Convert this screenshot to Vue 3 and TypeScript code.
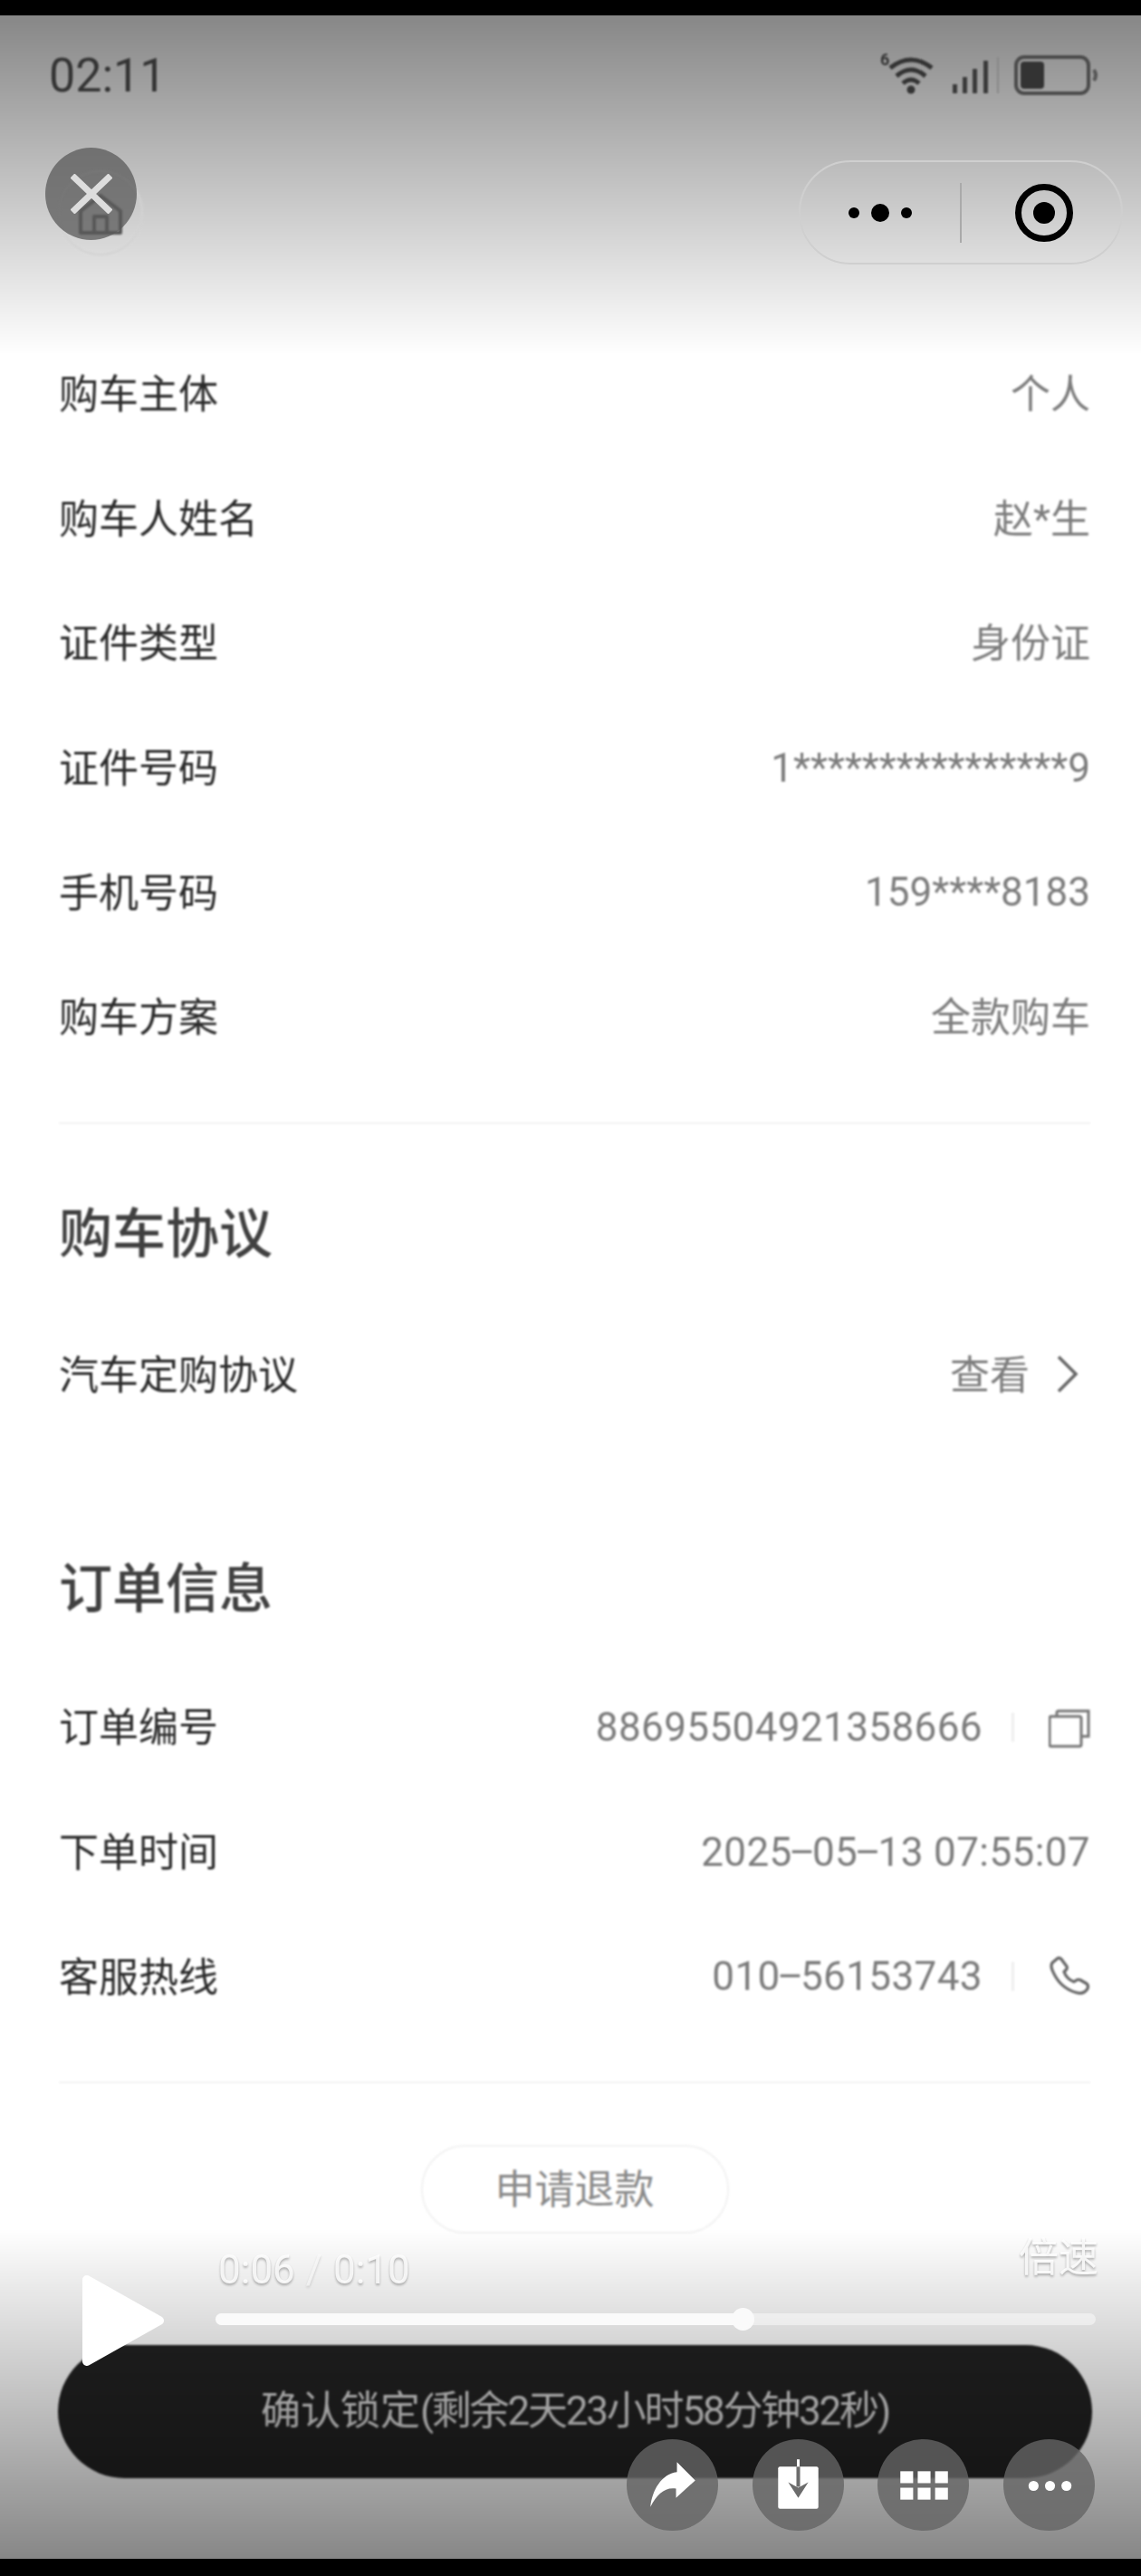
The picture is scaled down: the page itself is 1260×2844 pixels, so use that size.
<template>
  <div class="page">
    <main class="content">
      <div v-for="row in buyerRows" :key="row.label" class="row">
        <span class="label">{{ row.label }}</span>
        <span class="value" :class="{ digits: /\d/.test(row.value) }">{{ row.value }}</span>
      </div>
      <div class="divider first-divider"></div>

      <h2 class="heading agreement-heading">购车协议</h2>
      <div class="row agreement-row">
        <span class="label">汽车定购协议</span>
        <span class="value link">
          查看
          <svg class="chevron" viewBox="0 0 25 42" fill="none">
            <path d="M3 2 L22 21 L3 40" stroke="#666" stroke-width="3.5" />
          </svg>
        </span>
      </div>

      <h2 class="heading order-heading">订单信息</h2>
      <div class="order-rows">
        <div class="row">
          <span class="label">订单编号</span>
          <span class="value digits number">
            88695504921358666
            <i class="sep"></i>
            <svg class="action" viewBox="0 0 46 46" fill="none" stroke="#777" stroke-width="3">
              <rect x="1" y="11" width="35" height="33" rx="2" />
              <path d="M9 11 V7 Q9 5 11 5 H37 M36 5 H44 V33 H36" />
            </svg>
          </span>
        </div>
        <div class="row">
          <span class="label">下单时间</span>
          <span class="value digits number">
            <span>2025<b class="dash">–</b>05<b class="dash">–</b>13 07:55:07</span>
          </span>
        </div>
        <div class="row">
          <span class="label">客服热线</span>
          <span class="value digits number">
            <span>010<b class="dash">–</b>56153743</span>
            <i class="sep"></i>
            <svg class="action" viewBox="0 0 46 46" fill="none" stroke="#666" stroke-width="3.2" stroke-linejoin="round">
              <path d="M4 8 L10 3 Q12 2 14 4 L20 12 Q21 14 19 16 L17 18 Q20 26 28 29 L31 27 Q33 26 35 27 L42 31 Q45 34 42 38 Q38 43 31 41 Q12 36 4 16 Q2 11 4 8 Z" />
            </svg>
          </span>
        </div>
      </div>
      <div class="divider last-divider"></div>

      <div class="refund-wrap">
        <button class="refund" type="button">申请退款</button>
      </div>
    </main>

    <button class="confirm" type="button">确认锁定<span class="countdown">(剩余2天23小时58分钟32秒)</span></button>

    <div class="shade shade-top"></div>
    <div class="shade shade-bottom"></div>
    <div class="black-bar black-top"></div>
    <div class="black-bar black-bottom"></div>

    <header class="status">
      <span class="clock">02:11</span>
      <div class="status-icons">
        <span class="wifi-six">6</span>
        <svg class="wifi" viewBox="0 0 52 44" fill="none" stroke="#333" stroke-width="5">
          <path d="M3 14 Q26 -4 49 14" />
          <path d="M10 23 Q26 9 42 23" />
          <path d="M17 31 Q26 23 35 31" />
          <circle cx="26" cy="38" r="4.5" fill="#333" stroke="none" />
        </svg>
        <svg class="signal" viewBox="0 0 52 40" fill="#3a3a3a">
          <rect x="0" y="30" width="5" height="10" />
          <rect x="11" y="22" width="5" height="18" />
          <rect x="22" y="13" width="5" height="27" />
          <rect x="34" y="4" width="5" height="36" />
          <rect x="49" y="0" width="2" height="40" fill="#888" />
        </svg>
        <svg class="battery" viewBox="0 0 94 44" fill="none">
          <rect x="2" y="2" width="80" height="40" rx="9" stroke="#4a4a4a" stroke-width="4" />
          <rect x="7" y="7" width="26" height="30" rx="4" fill="#333" />
          <path d="M88 16 Q92 22 88 28" stroke="#555" stroke-width="4" />
        </svg>
      </div>
    </header>

    <div class="home-btn">
      <svg class="home-icon" viewBox="0 0 52 46" fill="none" stroke="#555" stroke-width="4" stroke-linejoin="round">
        <path d="M4 20 L26 3 L48 20 V44 H4 Z" />
        <path d="M19 44 V26 H33 V44" />
      </svg>
    </div>
    <div class="close-btn">
      <svg viewBox="0 0 46 44" fill="none" stroke="#ddd" stroke-width="7">
        <path d="M2 2 L44 42 M44 2 L2 42" />
      </svg>
    </div>

    <div class="capsule">
      <div class="capsule-dots">
        <i class="dot"></i>
        <i class="dot big"></i>
        <i class="dot"></i>
      </div>
      <i class="capsule-line"></i>
      <div class="capsule-target"><i></i></div>
    </div>

    <svg class="play" viewBox="0 0 92 102">
      <path d="M6 6 L86 51 L6 96 Z" fill="#fff" stroke="#fff" stroke-width="10" stroke-linejoin="round" />
    </svg>
    <span class="time">0:06<em>/</em>0:10</span>
    <span class="speed">倍速</span>
    <div class="progress">
      <div class="progress-fill" :style="{ width: progress + '%' }"></div>
      <i class="thumb" :style="{ left: progress + '%' }"></i>
    </div>

    <div class="tools">
      <button class="tool" type="button">
        <svg viewBox="0 0 100 100">
          <path d="M55 25 L75 45 L54 64 V54 C42 52 33 60 26 74 C28 56 38 38 55 36 Z" fill="#fff" />
        </svg>
      </button>
      <button class="tool" type="button">
        <svg viewBox="0 0 100 100">
          <rect x="28" y="30" width="44" height="46" rx="2" fill="#fff" />
          <path d="M50 22 V40" stroke="#fff" stroke-width="3" />
          <path d="M50 30 V52" stroke="#6c6c6c" stroke-width="4" />
          <path d="M39 47 L50 64 L61 47 L50 53 Z" fill="#6c6c6c" />
        </svg>
      </button>
      <button class="tool" type="button">
        <svg viewBox="0 0 100 100" fill="#fff">
          <rect v-for="cell in gridCells" :key="cell.x + '-' + cell.y" :x="cell.x" :y="cell.y" width="14" height="13" />
        </svg>
      </button>
      <button class="tool" type="button">
        <svg viewBox="0 0 100 100" fill="#fff">
          <circle cx="33" cy="51" r="5.5" />
          <circle cx="51" cy="51" r="5.5" />
          <circle cx="69" cy="51" r="5.5" />
        </svg>
      </button>
    </div>
  </div>
</template>

<script setup lang="ts">
interface InfoRow {
  label: string
  value: string
}

const buyerRows: InfoRow[] = [
  { label: '购车主体', value: '个人' },
  { label: '购车人姓名', value: '赵*生' },
  { label: '证件类型', value: '身份证' },
  { label: '证件号码', value: '1****************9' },
  { label: '手机号码', value: '159****8183' },
  { label: '购车方案', value: '全款购车' },
]

// Шкала плеера, процент пройденного
const progress = 60

const gridCells = [25, 44, 63].flatMap((x) => [35, 53].map((y) => ({ x, y })))
</script>

<style>
html,
body {
  margin: 0;
  background: #000;
}
</style>

<style scoped>
.page {
  position: relative;
  width: 1260px;
  height: 2844px;
  overflow: hidden;
  background: #fff;
  font-family: Roboto, "Noto Sans CJK SC", sans-serif;
}

.content {
  box-sizing: border-box;
  padding: 366px 56px 0 65px;
  filter: blur(1px);
}

.row {
  box-sizing: border-box;
  display: flex;
  align-items: center;
  justify-content: space-between;
  height: 137.6px;
  padding-bottom: 5px;
}

.label {
  font-size: 44px;
  color: #2b2b2b;
}

.value {
  display: flex;
  align-items: center;
  font-size: 44px;
  color: #7c7c7c;
}

.digits {
  padding-top: 5px;
}

.number {
  letter-spacing: 0.4px;
}

.dash {
  margin: 0 -3.5px;
  font-weight: 400;
}

.divider {
  height: 2px;
  background: #f2f2f2;
}

.first-divider {
  margin-top: 47px;
}

.last-divider {
  margin-top: 47px;
}

.heading {
  margin: 0;
  height: 90px;
  line-height: 90px;
  font-size: 59px;
  font-weight: 500;
  color: #404040;
}

.agreement-heading {
  margin-top: 77px;
}

.agreement-row {
  margin-top: 41px;
}

.order-heading {
  margin-top: 124px;
}

.order-rows {
  margin-top: 38px;
}

.chevron {
  width: 25px;
  height: 42px;
  margin: 5px 13px 0 29px;
}

.sep {
  width: 3px;
  height: 32px;
  margin: 0 38px 0 32px;
  background: #eee;
}

.action {
  width: 46px;
  height: 46px;
}

.refund-wrap {
  display: flex;
  justify-content: center;
  margin-top: 68px;
}

.refund {
  width: 340px;
  height: 98px;
  padding: 0 0 5px;
  border: 2px solid #f2f2f2;
  border-radius: 49px;
  background: #fff;
  font-family: inherit;
  font-size: 44px;
  color: #8a8a8a;
}

.confirm {
  position: absolute;
  left: 64px;
  top: 2589px;
  width: 1142px;
  height: 147px;
  padding: 0 0 10px;
  border: 0;
  border-radius: 74px;
  background: #222;
  font-family: inherit;
  font-size: 44px;
  color: #d8d8d8;
  filter: blur(1px);
}

.countdown {
  letter-spacing: -2.2px;
}

.shade {
  position: absolute;
  left: 0;
  width: 100%;
}

.shade-top {
  top: 17px;
  height: 375px;
  background: linear-gradient(rgba(0, 0, 0, 0.47), rgba(0, 0, 0, 0));
}

.shade-bottom {
  top: 2460px;
  height: 365px;
  background: linear-gradient(rgba(0, 0, 0, 0), rgba(0, 0, 0, 0.47));
}

.black-bar {
  position: absolute;
  left: 0;
  width: 100%;
  background: #000;
}

.black-top {
  top: 0;
  height: 17px;
}

.black-bottom {
  top: 2825px;
  height: 19px;
}

.status {
  position: absolute;
  left: 54px;
  right: 46px;
  top: 55px;
  height: 56px;
  display: flex;
  align-items: center;
  justify-content: space-between;
  filter: blur(1px);
}

.clock {
  font-size: 52px;
  color: #333;
}

.status-icons {
  position: relative;
  display: flex;
  align-items: center;
  height: 44px;
}

.wifi-six {
  position: absolute;
  left: -2px;
  top: -6px;
  font-size: 18px;
  font-weight: 700;
  color: #333;
}

.wifi {
  width: 52px;
  height: 44px;
  margin-left: 6px;
}

.signal {
  width: 52px;
  height: 40px;
  margin-left: 20px;
}

.battery {
  width: 94px;
  height: 44px;
  margin-left: 16px;
}

.home-btn {
  position: absolute;
  left: 64px;
  top: 188px;
  box-sizing: border-box;
  width: 94px;
  height: 94px;
  display: flex;
  align-items: center;
  justify-content: center;
  border: 2px solid #d2d2d2;
  border-radius: 50%;
  filter: blur(1px);
}

.home-icon {
  width: 52px;
  height: 46px;
  margin-top: 2px;
}

.close-btn {
  position: absolute;
  left: 50px;
  top: 163px;
  width: 101px;
  height: 102px;
  display: flex;
  align-items: center;
  justify-content: center;
  border-radius: 50%;
  background: rgba(90, 90, 90, 0.75);
}

.close-btn svg {
  width: 46px;
  height: 44px;
}

.capsule {
  position: absolute;
  left: 882px;
  top: 177px;
  box-sizing: border-box;
  width: 358px;
  height: 115px;
  display: flex;
  align-items: center;
  border: 2px solid #cfcfcf;
  border-radius: 58px;
  filter: blur(0.7px);
}

.capsule-dots {
  display: flex;
  align-items: center;
  justify-content: center;
  gap: 13px;
  width: 176px;
}

.dot {
  width: 12px;
  height: 12px;
  border-radius: 50%;
  background: #000;
}

.dot.big {
  width: 20px;
  height: 20px;
}

.capsule-line {
  width: 2px;
  height: 66px;
  background: #aaa;
}

.capsule-target {
  box-sizing: border-box;
  width: 64px;
  height: 64px;
  margin-left: 59px;
  display: flex;
  align-items: center;
  justify-content: center;
  border: 7px solid #000;
  border-radius: 50%;
}

.capsule-target i {
  width: 24px;
  height: 24px;
  border-radius: 50%;
  background: #000;
}

.play {
  position: absolute;
  left: 90px;
  top: 2511px;
  width: 92px;
  height: 102px;
}

.time {
  position: absolute;
  left: 241px;
  top: 2480px;
  font-size: 44px;
  line-height: 52px;
  color: rgba(255, 255, 255, 0.85);
  text-shadow: 0 2px 3px rgba(0, 0, 0, 0.3);
}

.time em {
  margin: 0 12px;
  font-style: normal;
  opacity: 0.5;
}

.speed {
  position: absolute;
  left: 1125px;
  top: 2467px;
  font-size: 44px;
  line-height: 52px;
  color: rgba(255, 255, 255, 0.85);
  text-shadow: 0 2px 3px rgba(0, 0, 0, 0.3);
}

.progress {
  position: absolute;
  left: 238px;
  top: 2554px;
  width: 972px;
  height: 13px;
  border-radius: 7px;
  background: rgba(255, 255, 255, 0.45);
}

.progress-fill {
  height: 100%;
  border-radius: 7px;
  background: #fafafa;
}

.thumb {
  position: absolute;
  top: -6px;
  width: 25px;
  height: 25px;
  margin-left: -13px;
  border-radius: 50%;
  background: #fafafa;
}

.tools {
  position: absolute;
  left: 692px;
  top: 2693px;
  display: flex;
  gap: 37.6px;
}

.tool {
  width: 101px;
  height: 101px;
  padding: 0;
  border: 0;
  border-radius: 50%;
  background: rgba(100, 100, 100, 0.8);
}

.tool svg {
  display: block;
  width: 100%;
  height: 100%;
}
</style>
